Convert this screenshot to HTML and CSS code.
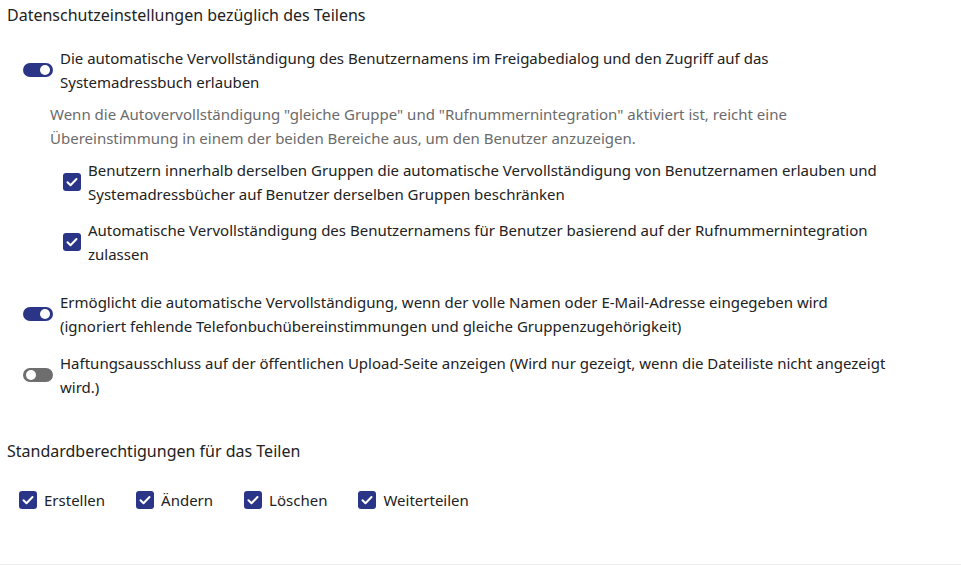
FILE: index.html
```html
<!DOCTYPE html>
<html lang="de">
<head>
<meta charset="utf-8">
<link rel="stylesheet" href="styles.css">
</head>
<body>
<div class="page">
  <section class="section">
    <h2 class="heading">Datenschutzeinstellungen bezüglich des Teilens</h2>

    <div class="toggle-row first">
      <span class="toggle on"><span class="knob"></span></span>
      <span class="label">Die automatische Vervollständigung des Benutzernamens im Freigabedialog und den Zugriff auf das Systemadressbuch erlauben</span>
    </div>

    <p class="hint">Wenn die Autovervollständigung "gleiche Gruppe" und "Rufnummernintegration" aktiviert ist, reicht eine Übereinstimmung in einem der beiden Bereiche aus, um den Benutzer anzuzeigen.</p>

    <div class="check-row sub first-sub">
      <span class="box"><svg viewBox="0 0 18 18" width="18" height="18"><path d="M4.5 9.3l3 3 6-6.3" fill="none" stroke="#fff" stroke-width="2" stroke-linecap="round" stroke-linejoin="round"/></svg></span>
      <span class="label">Benutzern innerhalb derselben Gruppen die automatische Vervollständigung von Benutzernamen erlauben und Systemadressbücher auf Benutzer derselben Gruppen beschränken</span>
    </div>

    <div class="check-row sub second-sub">
      <span class="box"><svg viewBox="0 0 18 18" width="18" height="18"><path d="M4.5 9.3l3 3 6-6.3" fill="none" stroke="#fff" stroke-width="2" stroke-linecap="round" stroke-linejoin="round"/></svg></span>
      <span class="label">Automatische Vervollständigung des Benutzernamens für Benutzer basierend auf der Rufnummernintegration zulassen</span>
    </div>

    <div class="toggle-row second">
      <span class="toggle on"><span class="knob"></span></span>
      <span class="label">Ermöglicht die automatische Vervollständigung, wenn der volle Namen oder E-Mail-Adresse eingegeben wird (ignoriert fehlende Telefonbuchübereinstimmungen und gleiche Gruppenzugehörigkeit)</span>
    </div>

    <div class="toggle-row third">
      <span class="toggle off"><span class="knob"></span></span>
      <span class="label">Haftungsausschluss auf der öffentlichen Upload-Seite anzeigen (Wird nur gezeigt, wenn die Dateiliste nicht angezeigt wird.)</span>
    </div>
  </section>

  <section class="section perms">
    <h2 class="heading">Standardberechtigungen für das Teilen</h2>
    <div class="perm-list">
      <div class="perm"><span class="box"><svg viewBox="0 0 18 18" width="18" height="18"><path d="M4.5 9.3l3 3 6-6.3" fill="none" stroke="#fff" stroke-width="2" stroke-linecap="round" stroke-linejoin="round"/></svg></span><span>Erstellen</span></div>
      <div class="perm"><span class="box"><svg viewBox="0 0 18 18" width="18" height="18"><path d="M4.5 9.3l3 3 6-6.3" fill="none" stroke="#fff" stroke-width="2" stroke-linecap="round" stroke-linejoin="round"/></svg></span><span>Ändern</span></div>
      <div class="perm"><span class="box"><svg viewBox="0 0 18 18" width="18" height="18"><path d="M4.5 9.3l3 3 6-6.3" fill="none" stroke="#fff" stroke-width="2" stroke-linecap="round" stroke-linejoin="round"/></svg></span><span>Löschen</span></div>
      <div class="perm"><span class="box"><svg viewBox="0 0 18 18" width="18" height="18"><path d="M4.5 9.3l3 3 6-6.3" fill="none" stroke="#fff" stroke-width="2" stroke-linecap="round" stroke-linejoin="round"/></svg></span><span>Weiterteilen</span></div>
    </div>
  </section>
</div>
</body>
</html>
```

FILE: styles.css
```css
html, body {
  margin: 0;
  padding: 0;
  background: #fff;
}
body {
  font-family: "Noto Sans", "Open Sans", sans-serif;
  font-size: 15px;
  line-height: 24px;
  color: #222;
}
.page {
  height: 564px;
  border-bottom: 1px solid #ededed;
  overflow: hidden;
}
.section {
  padding-left: 7px;
  width: 890px;
}
.heading {
  margin: 0;
  padding-top: 5px;
  font-size: 16px;
  font-weight: normal;
  line-height: 20px;
  color: #222;
}
.toggle-row {
  display: flex;
  align-items: center;
  gap: 7px;
  padding-left: 16px;
}
.toggle-row.first { margin-top: 21px; }
.toggle-row.second { margin-top: 24px; }
.toggle-row.third { margin-top: 13px; }
.toggle {
  flex: none;
  width: 30px;
  height: 14px;
  border-radius: 7px;
  position: relative;
}
.toggle.on { background: #2b3587; }
.toggle.off { background: #6e6e6e; }
.knob {
  position: absolute;
  top: 2px;
  width: 10px;
  height: 10px;
  border-radius: 50%;
  background: #fff;
}
.toggle.on .knob { right: 3px; }
.toggle.off .knob { left: 3px; }
.hint {
  margin: 8px 0 0 43px;
  color: #6b6b6b;
}
.check-row {
  display: flex;
  align-items: center;
  gap: 7px;
}
.check-row.sub { padding-left: 56px; }
.check-row.first-sub { margin-top: 8px; }
.check-row.second-sub { margin-top: 12px; }
.box {
  flex: none;
  width: 18px;
  height: 18px;
  border-radius: 3px;
  background: #2b3587;
  display: block;
}
.box svg { display: block; }
.perms .heading { margin-top: 37px; }
.perm-list {
  display: flex;
  gap: 31px;
  margin-top: 27px;
  padding-left: 12px;
}
.perm {
  display: flex;
  align-items: center;
  gap: 7px;
}
```
